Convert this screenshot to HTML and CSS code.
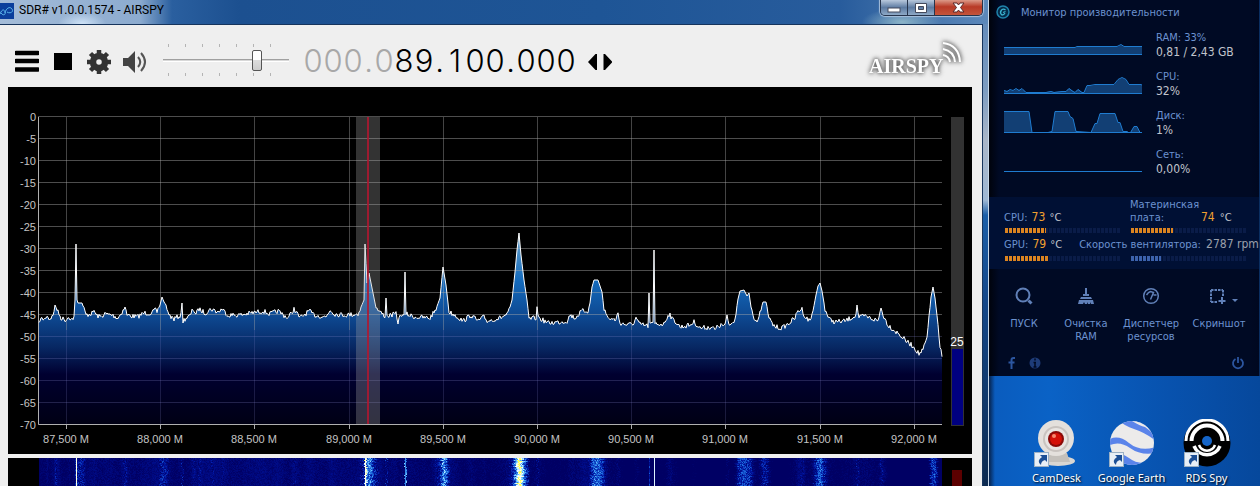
FILE: index.html
```html
<!DOCTYPE html>
<html lang="ru">
<head>
    <meta charset="UTF-8">
    <meta name="viewport" content="width=device-width, initial-scale=1.0">
    <title>SDR# v1.0.0.1574 - AIRSPY</title>
    <link rel="stylesheet" href="styles.css">
</head>
<body>
    <main class="sdr">
        <header class="titlebar">
            <svg class="app-icon" viewBox="0 0 14 16">
                <rect width="14" height="16" fill="#0b3f9c"/>
                <path d="M0 11c2-5 4-5 5-2s-2 4-4 1M5 10c1-5 5-7 7-4s-2 5-5 3" fill="none" stroke="#5cb8ee"/>
            </svg>
            <h1>SDR# v1.0.0.1574 - AIRSPY</h1>
            <div class="window-buttons">
                <button class="win-min" aria-label="Minimize">
                    <svg viewBox="0 0 14 10" width="14" height="10"><rect x="1" y="5" width="12" height="4" fill="#fff" stroke="#444a5c"/></svg>
                </button>
                <button class="win-max" aria-label="Maximize">
                    <svg viewBox="0 0 12 10" width="12" height="10"><path d="M.5.5h11v9H.5zM3.500 3.500h5v3h-5z" fill="#fff" fill-rule="evenodd" stroke="#444a5c"/></svg>
                </button>
                <button class="win-close" aria-label="Close">
                    <svg viewBox="0 0 13 11" width="13" height="11"><path d="M1 1h4l1.500 2L8 1h4L8.500 5.500 12 10H8L6.500 8 5 10H1l3.500-4.500z" fill="#fff" stroke="#5a2a2a"/></svg>
                </button>
            </div>
        </header>

        <div class="client">
            <div class="toolbar">
                <button class="tool" aria-label="Menu">
                    <svg viewBox="0 0 24 24"><path d="M1 3h22M1 11h22M1 19.500h22" stroke="#000" stroke-width="4.500" stroke-linecap="round"/></svg>
                </button>
                <button class="tool" aria-label="Stop">
                    <svg viewBox="0 0 24 24"><rect x="3" y="3" width="18" height="17" fill="#000"/></svg>
                </button>
                <button class="tool" aria-label="Settings">
                    <svg viewBox="0 0 24 24">
                        <circle cx="12" cy="12" r="6" fill="none" stroke="#333" stroke-width="6.500"/>
                        <path d="M12 0v4M12 20v4M0 12h4M20 12h4M3.500 3.500l3 3M17.500 17.500l3 3M3.500 20.500l3-3M17.500 6.500l3-3" stroke="#333" stroke-width="4.500"/>
                    </svg>
                </button>
                <button class="tool tool-audio" aria-label="Mute">
                    <svg viewBox="0 0 26 24">
                        <path d="M0 8h5l7-7v22l-7-7H0z" fill="#444"/>
                        <path d="M15 7q4.500 5 0 10" fill="none" stroke="#555" stroke-width="2"/>
                        <path d="M18 3q8 9 0 18" fill="none" stroke="#555" stroke-width="2"/>
                    </svg>
                </button>
                <input class="volume" type="range" min="0" max="100" value="76" aria-label="Volume">
                <div class="frequency">
                    <span class="off">0</span><span class="off">0</span><span class="off">0</span><i class="off">.</i><span class="off">0</span><span>8</span><span>9</span><i>.</i><span>1</span><span>0</span><span>0</span><i>.</i><span>0</span><span>0</span><span>0</span>
                </div>
                <button class="tool" aria-label="Tuning mode">
                    <svg viewBox="0 0 24 24"><path d="M9 4v16H7.500L0 12 7.500 4zM15.500 4v16H17l7.500-8L17 4z" fill="#000"/></svg>
                </button>
                <svg class="logo" viewBox="0 0 100 44">
                    <text x="5" y="35">AIRSPY</text>
                    <g fill="none" stroke="#fff" stroke-width="2">
                        <path d="M79 17q6 1 7 7M79 11q11 2 12 13M79 5q16 2 17 19"/>
                    </g>
                </svg>
            </div>

            <svg class="spectrum" id="spectrum" viewBox="8 87 964 367">
                <defs>
                    <linearGradient id="level" gradientUnits="userSpaceOnUse" x1="0" y1="233" x2="0" y2="424">
                        <stop offset="0" stop-color="#6ba4cc"/>
                        <stop offset="0.25" stop-color="#146abc"/>
                        <stop offset="0.45" stop-color="#0d468e"/>
                        <stop offset="0.6" stop-color="#072762"/>
                        <stop offset="0.74" stop-color="#000030"/>
                        <stop offset="1" stop-color="#000014"/>
                    </linearGradient>
                </defs>
                <rect x="8" y="87" width="964" height="367" fill="#000"/>
                <path id="area" fill="url(#level)"/>
                <g id="grid"></g>
                <path id="trace" fill="none" stroke="#fff"/>
                <rect x="356" y="117" width="24" height="307" fill="#aaa" fill-opacity="0.3"/>
                <rect x="367" y="117" width="2" height="307" fill="#b01830" fill-opacity="0.85"/>
                <rect x="951" y="117" width="13" height="309" fill="#323232"/>
                <rect x="952" y="349" width="11" height="76" fill="#000080"/>
                <text class="gain" x="957" y="346">25</text>
            </svg>
            <canvas class="waterfall" id="waterfall" width="964" height="28"></canvas>
        </div>
    </main>

    <aside class="side">
        <section class="monitor">
            <h2>
                <svg viewBox="0 0 14 14"><circle cx="7" cy="7" r="6" fill="#032a48" stroke="#1f83ab" stroke-width="1.500"/><path d="M9.500 5Q7 3 5.200 5.500T6 10q2 0 3-2M7 7.500l2.500-1" fill="none" stroke="#3cb4d0" stroke-width="1.300"/></svg>
                Монитор производительности
            </h2>
            <div class="meter">
                <svg viewBox="0 0 138 24"><path class="fill" d="M0 17h71l2-1h40l2-1 2-1 3 2h18v8H0z"/><path class="line" d="M0 16.500h71l2-1h40l4-2 3 2h18M0 23.500h138"/></svg>
                <p>RAM: 33%<b>0,81 / 2,43 GB</b></p>
            </div>
            <div class="meter">
                <svg viewBox="0 0 138 24"><path class="fill" d="M0 20l3 1 3-1 3 1 3-2 3 1 3-1 4 3h20l5-1 3 1 8-1h4l3-3 4 3 2 1 3-3 4 3h2l3-6h3l5-1h19l4-5 4-2 4 2 3 5h14v9H0z"/><path class="line" d="M0 20.500l3 1 3-2 3 1 3-2 3 2 3-2 4 4h20l5-1 3 1 8-1h4l3-3 4 3 2 1 3-3 4 3h2l3-7h3l5-1h19l4-5 4-2 4 2 3 5h12l2 1M0 23.500h138"/></svg>
                <p>CPU:<b>32%</b></p>
            </div>
            <div class="meter">
                <svg viewBox="0 0 138 24"><path class="fill" d="M0 2.500h25l3 21h16l4-1 3-20h13l2 5 3 2 3 13 15 1 4-9h2l3-10h15l3 9h2l3 9h4l3 2 4-7h3l3 6v2H0z"/><path class="line" d="M0 2.500h25l3 21h16l4-1 3-20h13l2 5 3 2 3 13 15 1 4-9h2l3-10h15l3 9h2l3 9h4l3 2 4-7h3l3 6M0 23.500h138"/></svg>
                <p>Диск:<b>1%</b></p>
            </div>
            <div class="meter">
                <svg viewBox="0 0 138 24"><path class="line" d="M0 23.500h138"/></svg>
                <p>Сеть:<b>0,00%</b></p>
            </div>

            <div class="temps">
                <div class="temp">
                    <p>CPU: <em>73</em> <b>°C</b></p>
                    <div class="bar"><div class="bar-value" style="width: 36%"></div></div>
                </div>
                <div class="temp">
                    <p class="wide"><span>Материнская плата:</span> <em>74</em> <b>°C</b></p>
                    <div class="bar"><div class="bar-value" style="width: 37%"></div></div>
                </div>
                <p class="fan-row"><span>GPU: <em>79</em> <b>°C</b></span> <span>Скорость вентилятора: <b class="rpm">2787 rpm</b></span></p>
                <div class="bar"><div class="bar-value" style="width: 39%"></div></div>
                <div class="bar"><div class="bar-value fan" style="width: 27%"></div></div>
            </div>

            <div class="actions">
                <button>
                    <svg viewBox="0 0 22 20"><circle cx="10" cy="9" r="6.500" fill="none" stroke="currentColor" stroke-width="2"/><path d="M15.500 14.500l3 3" stroke="currentColor" stroke-width="3"/></svg>
                    ПУСК
                </button>
                <button>
                    <svg viewBox="0 0 22 20"><path d="M10 2h2v6h-2zM8 8h6v2H8zM6 11h10l1 2H5zM4 14h14l1 4h-3l-1-2v2h-2l-1-2v2h-2l-1-2-1 2H3z" fill="currentColor"/></svg>
                    Очистка RAM
                </button>
                <button>
                    <svg viewBox="0 0 22 20"><circle cx="11" cy="10" r="7.300" fill="none" stroke="currentColor" stroke-width="1.500"/><path d="M6.500 9l2-2.500 2-1 3 1-3 7M13.500 9h3" fill="none" stroke="currentColor" stroke-width="1.500"/></svg>
                    Диспетчер ресурсов
                </button>
                <button>
                    <svg viewBox="0 0 22 20"><path d="M3 4h12M3 4v12M15 4v7M3 16h7" fill="none" stroke="currentColor" stroke-width="2" stroke-dasharray="2.500 1"/><path d="M14 11v7M10.500 15h7" stroke="currentColor" stroke-width="2"/></svg>
                    Скриншот
                    <span class="caret"></span>
                </button>
            </div>

            <div class="links">
                <a href="#" aria-label="Facebook"><svg viewBox="0 0 14 14"><path d="M10 2H8.500Q6.500 2 6.500 4v9M3.500 6.500h6" fill="none" stroke="#2c56a0" stroke-width="2"/></svg></a>
                <a href="#" aria-label="Info"><svg viewBox="0 0 14 14"><circle cx="7" cy="7" r="5.500" fill="#1e3c78"/><path d="M7 6v5M5.500 6.500H8M7 2.500v2M5.500 11h3" stroke="#000a22" stroke-width="1.500"/></svg></a>
                <button class="power" aria-label="Power"><svg viewBox="0 0 14 14"><path d="M4.500 3a5 5 0 1 0 5 0M7 1v6" fill="none" stroke="#2c56a0" stroke-width="1.800"/></svg></button>
            </div>
        </section>

        <section class="desktop">
            <a href="#" class="shortcut">
                <svg viewBox="0 0 48 48">
                    <ellipse cx="25" cy="42" rx="17" ry="5" fill="#d9d6d2"/>
                    <path d="M14 34h20l3 9H10z" fill="#c4c0bb"/>
                    <circle cx="23" cy="19" r="18" fill="#e4e0dc"/>
                    <circle cx="23" cy="20" r="13" fill="#c9c3bf"/>
                    <circle cx="23" cy="20" r="11" fill="#e9e5e2"/>
                    <circle cx="23" cy="20" r="8" fill="#8a0a08"/>
                    <circle cx="23" cy="20" r="6" fill="#d41008"/>
                    <circle cx="21" cy="17" r="2" fill="#f78a70"/>
                    <use href="#link-arrow"/>
                </svg>
                CamDesk
            </a>
            <a href="#" class="shortcut">
                <svg viewBox="0 0 48 48">
                    <clipPath id="globe"><circle cx="24" cy="24" r="22"/></clipPath>
                    <g clip-path="url(#globe)">
                        <path d="M0 0h48v48H0z" fill="#ecebea"/>
                        <path d="M10 0q4 6 16 10t22 12V0z" fill="#5b84ea"/>
                        <path d="M24 2q8 5 13 6l9 7-4-13z" fill="#ecebea"/>
                        <path d="M0 21q10-6 21 3t27 4v6q-15 3-26-5T0 27z" fill="#5b84ea"/>
                        <path d="M0 33q12-1 21 6t21 4l-9 5H12z" fill="#5b84ea"/>
                    </g>
                    <use href="#link-arrow"/>
                </svg>
                Google Earth
            </a>
            <a href="#" class="shortcut">
                <svg viewBox="0 0 48 48">
                    <circle cx="24" cy="24" r="23.500" fill="#000"/>
                    <g fill="none" stroke="#fff">
                        <path d="M3 22a21 21 0 0 1 42 0" stroke-width="3"/>
                        <path d="M8.500 22a15.500 15.500 0 0 1 31 0" stroke-width="4"/>
                        <path d="M11 27a14 14 0 0 0 26 0" stroke-width="3.500"/>
                        <path d="M16 26a8.500 8.500 0 0 0 16 0" stroke-width="2.500"/>
                    </g>
                    <circle cx="24" cy="22" r="5" fill="#1565c8"/>
                    <use href="#link-arrow"/>
                </svg>
                RDS Spy
            </a>
        </section>
    </aside>

    <svg class="symbols">
        <symbol id="link-arrow" viewBox="0 0 48 48">
            <rect x="1.500" y="33.500" width="14" height="14" fill="#e8eff6" stroke="#9bb0c4"/>
            <path d="M7 36h7v7l-2-2q-4 1-4 5-5-4 1-8z" fill="#1c4f96"/>
        </symbol>
    </svg>
    <script src="script.js"></script>
</body>
</html>
```

FILE: styles.css
```css
* {
    box-sizing: border-box;
}

body {
    margin: 0;
    height: 100vh;
    display: flex;
    overflow: hidden;
    background-color: #0a55b4;
    font-family: "DejaVu Sans Condensed", "DejaVu Sans", sans-serif;
    font-size: 11px;
}

button {
    padding: 0;
    border: none;
    background: none;
    font: inherit;
    color: inherit;
    cursor: pointer;
}

h1, h2, p {
    margin: 0;
    font-weight: normal;
}

svg {
    display: block;
}

.symbols {
    position: absolute;
    width: 0;
    height: 0;
}

/* SDR window */
.sdr {
    flex: 1;
    min-width: 0;
    display: flex;
    flex-direction: column;
    padding-right: 5px;
    border-right: 1px solid #c8d8e8;
    background: linear-gradient(#5c86b8, #7d9cc0 90px, #a9b6c8 140px, #9fb8d4 200px, #1c5fa8 215px, #14488a 300px, #0c2a50);
}

.titlebar {
    height: 24px;
    margin-right: -5px;
    padding-right: 5px;
    display: flex;
    align-items: flex-start;
    background:
        radial-gradient(ellipse 24px 12px at 82px 24px, #d0e4f8, transparent),
        radial-gradient(ellipse 40px 14px at 902px 22px, #8cb4c8, transparent),
        linear-gradient(90deg, #a4bcd8, #8cabcf 140px, #2a5f9f 172px, #1c5090 240px, #1e5596 600px, #285c9c 840px, #5c88ba);
}

.app-icon {
    width: 14px;
    height: 16px;
    margin-top: 3px;
}

.titlebar h1 {
    margin-left: 5px;
    font-family: Roboto, "Noto Sans", sans-serif;
    font-size: 12px;
    line-height: 21px;
    color: #000;
    white-space: nowrap;
}

.window-buttons {
    display: flex;
    height: 16px;
    margin-left: auto;
    border: 1px solid #26344c;
    border-top: none;
    border-radius: 0 0 5px 5px;
    overflow: hidden;
    box-shadow: 0 0 1px 1px #a8c0dc;
}

.window-buttons button {
    width: 27px;
    display: flex;
    align-items: center;
    justify-content: center;
    border-right: 1px solid #26344c;
    background: linear-gradient(#b8c8dc, #5d7ba2 50%, #8ea9c6);
}

.window-buttons .win-close {
    width: 47px;
    border-right: none;
    background: linear-gradient(#dc9a88, #b83a26 45%, #c4553c);
}

.client {
    flex: 1;
    min-height: 0;
    display: flex;
    flex-direction: column;
    padding: 0 10px 0 8px;
    border-top: 1px solid #16345c;
    border-right: 1px solid #16345c;
    background-color: #efefef;
}

.toolbar {
    display: flex;
    align-items: center;
    gap: 12px;
    height: 62px;
    flex-shrink: 0;
    padding: 12px 8px 0 7px;
}

.tool {
    width: 24px;
    height: 24px;
    flex-shrink: 0;
}

.tool-audio {
    width: 26px;
}

.volume {
    appearance: none;
    width: 130px;
    height: 32px;
    margin: 0 0 4px;
    background:
        repeating-linear-gradient(90deg, #b4b4b4 0 1px, transparent 1px 17px) 7px 0 / 118px 3px no-repeat,
        repeating-linear-gradient(90deg, #b4b4b4 0 1px, transparent 1px 17px) 7px 100% / 118px 3px no-repeat,
        linear-gradient(#a0a0a0 1px, #d8d8d8 1px 2px, #fff 2px) 2px 50% / 126px 3px no-repeat;
}

.volume::-webkit-slider-thumb {
    appearance: none;
    width: 10px;
    height: 21px;
    border: 1px solid #555;
    border-radius: 2px;
    background: linear-gradient(#fff 45%, #dcdcdc 50%, #ccc);
}

.frequency {
    display: flex;
    margin-bottom: 2px;
    font-family: Inter, "DejaVu Sans", sans-serif;
    font-weight: 300;
    font-size: 31px;
    line-height: 32px;
    color: #000;
}

.frequency span {
    width: 20px;
    text-align: center;
}

.frequency i {
    width: 11px;
    font-style: normal;
    text-align: center;
}

.frequency .off {
    color: #a8a8a8;
}

.logo {
    width: 100px;
    height: 44px;
    margin-left: auto;
    margin-bottom: 4px;
    overflow: visible;
    filter: drop-shadow(0 0 2px #444) drop-shadow(0 0 2px #999);
}

.logo text {
    font-family: "Liberation Serif", serif;
    font-weight: bold;
    font-size: 20px;
    fill: #fff;
}

.spectrum {
    width: 100%;
    flex-shrink: 0;
    font-family: "Liberation Sans", Arial, sans-serif;
    font-size: 11px;
}

.spectrum text {
    fill: #c4c4c4;
}

.spectrum .gain {
    font-size: 12px;
    text-anchor: middle;
    fill: #fff;
}

.spectrum .y-label {
    text-anchor: end;
}

.spectrum .x-label {
    text-anchor: middle;
}

.waterfall {
    width: 100%;
    margin-top: 4px;
    background-color: #000;
}

/* Right side: gadget and desktop */
.side {
    flex: 0 0 271px;
    display: flex;
    flex-direction: column;
}

.monitor {
    display: flex;
    flex-direction: column;
    flex-shrink: 0;
    height: 376px;
    background: linear-gradient(90deg, #00030c, #000a24 10px, #000a24 260px, #000820);
    border-right: 1px solid #0a2e60;
    color: #6c92d0;
}

.monitor h2 {
    display: flex;
    align-items: center;
    gap: 11px;
    height: 24px;
    margin-bottom: 6px;
    padding-left: 7px;
    font-size: 11px;
    white-space: nowrap;
}

.monitor h2 svg {
    width: 14px;
    height: 14px;
}

.meter {
    display: flex;
    gap: 14px;
    height: 39px;
    padding-left: 15px;
}

.meter svg {
    width: 138px;
    height: 24px;
    margin-top: 1px;
}

.meter .fill {
    fill: #123f74;
}

.meter .line {
    fill: none;
    stroke: #1f7cd0;
}

.meter p {
    line-height: 15px;
}

.meter b {
    display: block;
    font-size: 12px;
    font-weight: normal;
    color: #c0c4cc;
}

.temps {
    display: grid;
    grid-template-columns: 116px 116px;
    column-gap: 10px;
    align-items: end;
    margin-top: 11px;
    padding: 1px 0 8px 15px;
    background-color: #001034;
    white-space: nowrap;
}

.temps em {
    margin: 0 1px;
    font-style: normal;
    font-size: 12px;
    color: #f0a030;
}

.temps b {
    font-weight: normal;
    color: #c0c4cc;
}

.temp p {
    line-height: 13px;
    margin-bottom: 4px;
}

.temp .wide {
    display: flex;
    align-items: flex-end;
    gap: 4px;
}

.wide span {
    width: 66px;
    white-space: normal;
}

.temps .fan-row {
    grid-column: 1 / 3;
    display: flex;
    gap: 17px;
    line-height: 22px;
}

.temps .rpm {
    margin-left: 2px;
    font-size: 12px;
    color: #9aa0ac;
}

.bar {
    height: 5px;
    background: repeating-linear-gradient(90deg, transparent 0 1px, #0a1c48 1px 4px);
}

.bar-value {
    height: 5px;
    background: repeating-linear-gradient(90deg, transparent 0 1px, #dc8420 1px 4px);
}

.bar-value.fan {
    background: repeating-linear-gradient(90deg, transparent 0 1px, #3c62ac 1px 4px);
}

.actions {
    display: grid;
    grid-template-columns: 62px 62px 68px 68px;
    align-items: start;
    margin-top: 17px;
    padding-left: 4px;
}

.actions button {
    position: relative;
    display: flex;
    flex-direction: column;
    align-items: center;
    gap: 11px;
    line-height: 13px;
}

.actions svg {
    width: 22px;
    height: 20px;
    color: #6080b8;
}

.caret {
    position: absolute;
    top: 13px;
    right: 15px;
    border: 3px solid transparent;
    border-top-color: #6080b8;
    border-bottom: none;
}

.links {
    display: flex;
    align-items: center;
    gap: 9px;
    margin-top: auto;
    padding: 0 14px 6px 16px;
}

.links svg {
    width: 14px;
    height: 14px;
}

.links .power {
    margin-left: auto;
}

.desktop {
    flex: 1;
    display: flex;
    align-items: flex-start;
    padding: 43px 0 0 30px;
    background: linear-gradient(90deg, #06224c, #0a5cbe 6px, #0a62c6 60px, #0852ae 180px, #06489c);
}

.shortcut {
    width: 75px;
    display: flex;
    flex-direction: column;
    align-items: center;
    font-family: "Noto Sans", sans-serif;
    font-size: 11px;
    line-height: 22px;
    color: #fff;
    text-decoration: none;
    text-shadow: 1px 1px 2px #000;
    white-space: nowrap;
}

.shortcut svg {
    width: 48px;
    height: 48px;
}
```

FILE: script.js
```js
// Spectrum trace: x, y pairs in plot units
const points = [
    39,325, 40,319, 45,319, 47,315, 49,319, 53,316, 55,305, 58,312, 61,318, 66,320, 69,316, 71,320, 74,317, 75,300,
    76,244, 77,300, 78,303, 82,303, 84,309, 86,315, 93,313, 94,310, 96,315, 100,317, 105,314, 112,315, 118,318,
    122,312, 125,307, 127,315, 137,317, 144,313, 152,313, 155,310, 157,312, 160,305, 162,297, 164,302, 166,305,
    168,312, 170,316, 174,319, 181,315, 182,303, 183,321, 186,318, 190,316, 193,309, 196,314, 199,309, 205,313,
    211,309, 218,312, 222,309, 228,315, 240,315, 263,311, 270,314, 278,311, 288,318, 294,309, 300,318, 309,311,
    314,315, 326,317, 330,310, 335,314, 345,315, 358,314, 361,307, 364,300, 365,244, 367,283, 369,273, 372,288,
    374,298, 376,308, 380,312, 385,316, 386,298, 387,316, 396,314, 398,322, 401,314, 404,317, 405,272, 406,314,
    415,317, 430,318, 436,309, 440,298, 443,267, 446,285, 449,312, 455,315, 463,321, 471,315, 478,321, 484,317,
    487,321, 500,318, 508,314, 512,300, 515,272, 517,250, 519,233, 521,255, 524,280, 527,300, 529,319, 536,318,
    537,309, 539,318, 548,323, 560,322, 567,321, 570,315, 575,318, 582,311, 588,311, 590,303, 592,287, 594,280,
    598,280, 602,292, 604,309, 608,318, 615,320, 618,314, 620,323, 628,325, 634,323, 636,318, 639,324, 648,326,
    649,293, 650,324, 653,324, 654,250, 655,324, 664,324, 668,315, 670,314, 672,319, 676,322, 680,327, 690,325,
    694,322, 700,328, 712,327, 715,330, 718,326, 725,325, 727,317, 729,325, 734,322, 736,312, 738,299, 740,291,
    744,290, 747,296, 749,293, 751,307, 755,320, 758,322, 761,309, 763,302, 766,302, 768,315, 772,324, 776,327,
    782,328, 788,324, 795,318, 798,311, 802,309, 805,317, 810,321, 813,311, 816,295, 818,286, 820,283, 822,291,
    825,309, 829,319, 835,322, 845,321, 853,317, 856,315, 857,305, 859,318, 864,316, 873,319, 878,321, 881,308,
    884,317, 888,325, 895,331, 900,335, 906,341, 910,344, 914,347, 919,354, 923,350, 927,338, 929,318, 931,297,
    933,287, 935,298, 938,325, 940,346, 942,357
];

let seed = 7;
function random() {
    seed = (seed * 16807) % 2147483647;
    return seed / 2147483647;
}

function levelAt(x) {
    let i = 0;
    while (i < points.length - 4 && points[i + 2] < x) {
        i += 2;
    }
    const t = (x - points[i]) / (points[i + 2] - points[i]);
    return points[i + 1] + (points[i + 3] - points[i + 1]) * t;
}

function drawGrid() {
    let html = '';
    for (let i = 0; i <= 14; i++) {
        const y = 116.5 + i * 22;
        const color = y > 330 ? '#8888cc' : '#aaaaaa';
        const opacity = y > 330 ? 0.25 : 0.45;
        html += `<path d="M38 ${y}H942" stroke="${color}" stroke-opacity="${opacity}"/>`;
        html += `<text class="y-label" x="36" y="${y + 4.5}">${i ? -5 * i : 0}</text>`;
    }
    for (let i = 0; i < 10; i++) {
        const x = Math.round(66 + i * 94.2) + 0.5;
        const label = ((87500 + i * 500) / 1000).toFixed(3).replace('.', ',') + ' M';
        html += `<path d="M${x} 117V330" stroke="#aaa" stroke-opacity="0.4"/>`;
        html += `<path d="M${x} 330V424" stroke="#8888cc" stroke-opacity="0.2"/>`;
        html += `<path d="M${x} 425v4" stroke="#aaa"/>`;
        html += `<text class="x-label" x="${x - 0.5}" y="443">${label}</text>`;
    }
    html += '<path d="M38.5 117V424.5H942" fill="none" stroke="#b0b0b0"/>';
    document.getElementById('grid').innerHTML = html;
}

function drawTrace() {
    const line = [];
    for (let x = 39; x <= 942; x++) {
        let y = levelAt(x);
        if (y > 308) {
            y += (random() - 0.5) * 5;
        }
        line.push(`${x} ${y.toFixed(1)}`);
    }
    const d = 'M' + line.join('L');
    document.getElementById('trace').setAttribute('d', d);
    document.getElementById('area').setAttribute('d', d + 'V424H39z');
}

const palette = [
    [0, 0, 0, 100], [0.25, 0, 20, 160], [0.5, 30, 110, 225],
    [0.65, 110, 200, 255], [0.85, 255, 255, 255], [1, 255, 255, 80]
];

function paletteColor(t) {
    t = Math.max(0, Math.min(1, t));
    let i = 0;
    while (i < palette.length - 2 && palette[i + 1][0] < t) {
        i++;
    }
    const a = palette[i];
    const b = palette[i + 1];
    const k = (t - a[0]) / (b[0] - a[0]);
    const mix = [1, 2, 3].map(c => Math.round(a[c] + (b[c] - a[c]) * k));
    return `rgb(${mix.join(',')})`;
}

function drawWaterfall() {
    const ctx = document.getElementById('waterfall').getContext('2d');
    for (let y = 0; y < 28; y++) {
        const shift = Math.round((random() - 0.5) * 3);
        for (let x = 39; x < 942; x++) {
            const carrier = x === 76 || x === 365 || x === 405 || x === 654;
            const spur = x > 640 && x < 664;
            const level = levelAt(carrier || spur || x < 90 ? x : x + shift);
            let t = (320 - level) / 87;
            if (!carrier) {
                t += (random() - 0.5) * (t > 0.12 ? 0.35 : 0.12);
            }
            ctx.fillStyle = paletteColor(t);
            ctx.fillRect(x - 8, y, 1, 1);
        }
    }
    ctx.fillStyle = '#5c0000';
    ctx.fillRect(944, 12, 10, 16);
}

drawGrid();
drawTrace();
drawWaterfall();
```
